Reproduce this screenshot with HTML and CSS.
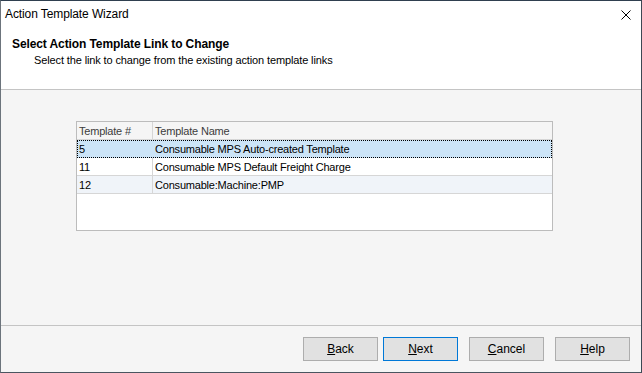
FILE: index.html
```html
<!DOCTYPE html>
<html lang="en">

<head>
    <meta charset="UTF-8">
    <title>Action Template Wizard</title>
    <link rel="stylesheet" href="styles.css">
</head>

<body>
    <div class="window">
        <div class="titlebar">
            <span class="title">Action Template Wizard</span>
            <svg class="close" width="10" height="10" viewBox="0 0 10 10">
                <path d="M0.5 0.5 L9.5 9.5 M9.5 0.5 L0.5 9.5" stroke="#000" stroke-width="1" fill="none" />
            </svg>
        </div>
        <div class="header">
            <div class="heading">Select Action Template Link to Change</div>
            <div class="subheading">Select the link to change from the existing action template links</div>
        </div>
        <div class="content">
            <div class="grid">
                <div class="row head">
                    <div class="cell">Template #</div>
                    <div class="cell">Template Name</div>
                </div>
                <div class="row selected">
                    <div class="cell">5</div>
                    <div class="cell">Consumable MPS Auto-created Template</div>
                </div>
                <div class="row">
                    <div class="cell">11</div>
                    <div class="cell">Consumable MPS Default Freight Charge</div>
                </div>
                <div class="row alt">
                    <div class="cell">12</div>
                    <div class="cell">Consumable:Machine:PMP</div>
                </div>
            </div>
        </div>
        <div class="footer">
            <button class="btn"><u>B</u>ack</button>
            <button class="btn default"><u>N</u>ext</button>
            <button class="btn gap"><u>C</u>ancel</button>
            <button class="btn gap"><u>H</u>elp</button>
        </div>
    </div>
</body>

</html>
```

FILE: styles.css
```css
body {
    margin: 0;
    background: #f5f5f5;
    font-family: 'Liberation Sans', Arial, sans-serif;
}

.window {
    width: 642px;
    height: 373px;
    box-sizing: border-box;
    border: 1px solid #6c747c;
    border-top-color: #2f3f4f;
    border-right-color: #3c4854;
    border-bottom-color: #4a5560;
    display: flex;
    flex-direction: column;
    background: #f5f5f5;
}

.titlebar {
    height: 25px;
    flex: none;
    background: #fff;
    display: flex;
    align-items: center;
    padding: 0 10px 0 4px;
}

.title {
    font-size: 12px;
    letter-spacing: -0.1px;
    color: #000;
    flex: 1;
}

.close {
    margin-top: 2px;
}

/* white band with the step title */
.header {
    flex: none;
    height: 52px;
    background: #fff;
    border-bottom: 1px solid #c4c4c4;
    padding: 11px 0 0 11px;
}

.heading {
    font-size: 12px;
    font-weight: bold;
    line-height: 14px;
    letter-spacing: -0.1px;
    color: #000;
}

.subheading {
    font-size: 11px;
    line-height: 14px;
    letter-spacing: -0.12px;
    margin: 2px 0 0 22px;
    color: #000;
}

.content {
    flex: 1;
    padding: 31px 0 0 75px;
}

.grid {
    width: 477px;
    height: 110px;
    box-sizing: border-box;
    border: 1px solid #bcbcbc;
    background: #fff;
    font-size: 11px;
    letter-spacing: -0.2px;
}

.row {
    display: grid;
    grid-template-columns: 76px 1fr;
    height: 18px;
    box-sizing: border-box;
    border-bottom: 1px solid #d6d6d6;
    line-height: 18px;
    color: #000;
}

.cell {
    padding-left: 2px;
    white-space: nowrap;
}

.cell:first-child {
    border-right: 1px solid #d6d6d6;
}

.row.head {
    background: #f5f5f5;
    color: #3c3c3c;
}

.row.selected {
    background: #cce4f7;
    border-bottom: none;
    outline: 1px dotted #000;
    outline-offset: -1px;
}

.row.selected .cell:first-child {
    border-right-color: #cce4f7;
}

.row.alt {
    background: #f0f4f9;
}

.footer {
    height: 47px;
    flex: none;
    box-sizing: border-box;
    border-top: 1px solid #c4c4c4;
    display: flex;
    justify-content: flex-end;
    align-items: flex-start;
    padding: 11px 11px 0 0;
}

.btn {
    width: 75px;
    height: 24px;
    margin-left: 5px;
    border: 1px solid #adadad;
    background: #e1e1e1;
    font-family: 'Liberation Sans', Arial, sans-serif;
    font-size: 12px;
    color: #000;
    padding: 0;
}

.btn.gap {
    margin-left: 11px;
}

.btn.default {
    border-color: #0078d7;
}
```
